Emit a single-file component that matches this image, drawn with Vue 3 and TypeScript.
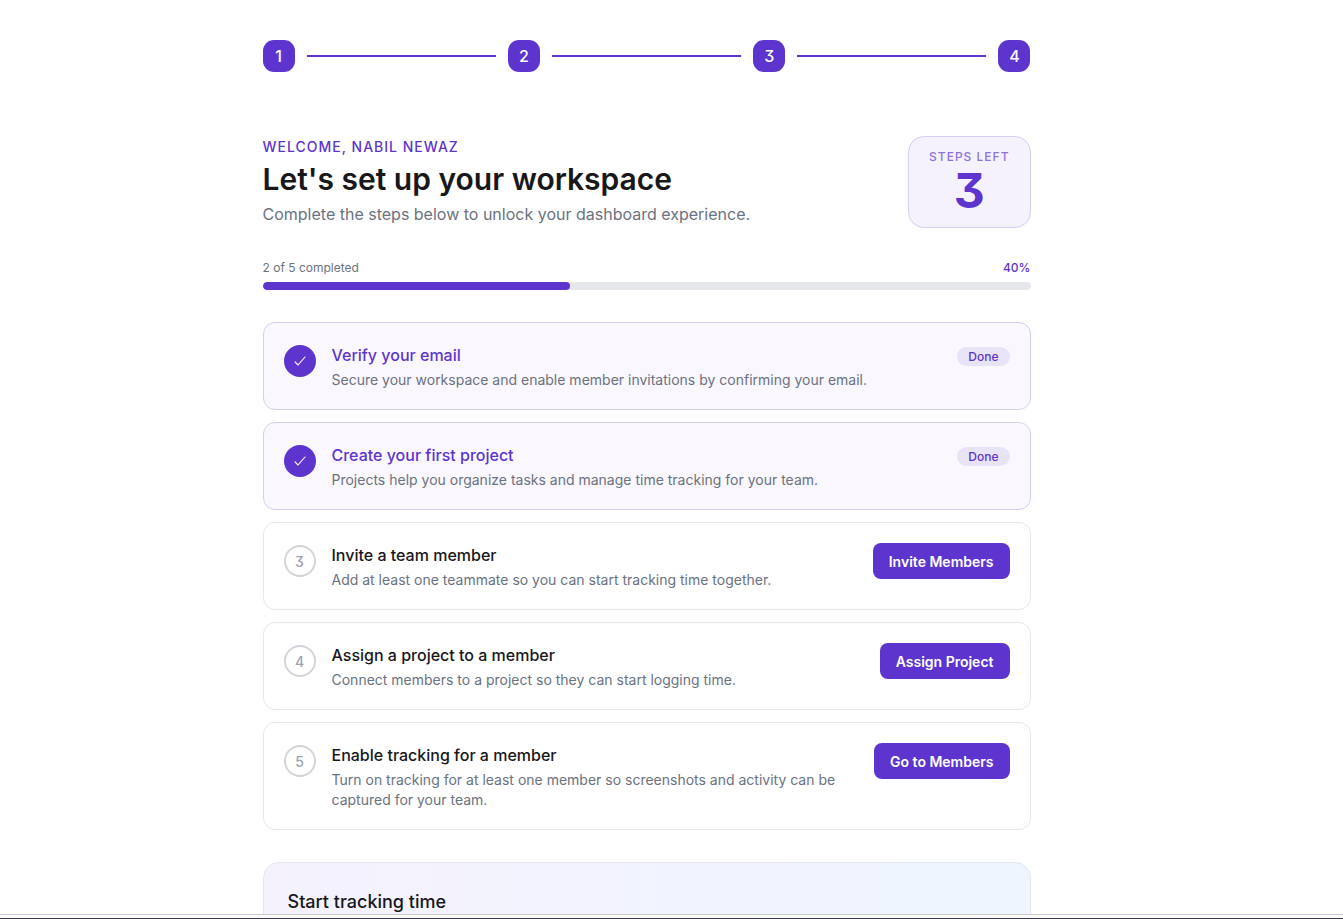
<script setup lang="ts">
import { computed } from 'vue'

interface Task {
  title: string
  description: string
  done: boolean
  action?: string
}

const userName = 'Nabil Newaz'
const stages = [1, 2, 3, 4]

const tasks: Task[] = [
  {
    title: 'Verify your email',
    description: 'Secure your workspace and enable member invitations by confirming your email.',
    done: true,
  },
  {
    title: 'Create your first project',
    description: 'Projects help you organize tasks and manage time tracking for your team.',
    done: true,
  },
  {
    title: 'Invite a team member',
    description: 'Add at least one teammate so you can start tracking time together.',
    done: false,
    action: 'Invite Members',
  },
  {
    title: 'Assign a project to a member',
    description: 'Connect members to a project so they can start logging time.',
    done: false,
    action: 'Assign Project',
  },
  {
    title: 'Enable tracking for a member',
    description:
      'Turn on tracking for at least one member so screenshots and activity can be captured for your team.',
    done: false,
    action: 'Go to Members',
  },
]

const completed = computed(() => tasks.filter((t) => t.done).length)
const remaining = computed(() => tasks.length - completed.value)
const percent = computed(() => Math.round((completed.value / tasks.length) * 100))
</script>

<template>
  <div class="shell">
    <main class="page">
      <div class="content">
        <ol class="stepper">
          <template v-for="n in stages" :key="n">
            <li v-if="n > 1" class="connector" aria-hidden="true"></li>
            <li class="stage">{{ n }}</li>
          </template>
        </ol>

        <header class="intro">
          <div class="intro-text">
            <p class="eyebrow">Welcome, {{ userName }}</p>
            <h1>Let's set up your workspace</h1>
            <p class="lead">Complete the steps below to unlock your dashboard experience.</p>
          </div>
          <div class="counter">
            <span class="counter-label">Steps left</span>
            <strong class="counter-value">{{ remaining }}</strong>
          </div>
        </header>

        <section class="progress">
          <div class="progress-row">
            <span id="progress-label">{{ completed }} of {{ tasks.length }} completed</span>
            <span class="percent">{{ percent }}%</span>
          </div>
          <div
            class="track"
            role="progressbar"
            aria-labelledby="progress-label"
            :aria-valuenow="percent"
            aria-valuemin="0"
            aria-valuemax="100"
          >
            <div class="fill" :style="{ width: percent + '%' }"></div>
          </div>
        </section>

        <ul class="tasks">
          <li v-for="(task, i) in tasks" :key="task.title" class="task" :class="{ done: task.done }">
            <span class="marker">
              <svg v-if="task.done" width="16" height="16" viewBox="0 0 16 16" fill="none" aria-hidden="true">
                <path d="M3 8.9 6 12 13 4" stroke="currentColor" stroke-width="1.1" stroke-linecap="round" stroke-linejoin="round" />
              </svg>
              <template v-else>{{ i + 1 }}</template>
            </span>
            <div class="task-text">
              <h2>{{ task.title }}</h2>
              <p>{{ task.description }}</p>
            </div>
            <span v-if="task.done" class="pill">Done</span>
            <button v-else type="button" class="action">{{ task.action }}</button>
          </li>
        </ul>

        <section class="panel">
          <h2>Start tracking time</h2>
        </section>
      </div>
    </main>
    <div class="edge"></div>
  </div>
</template>

<style>
body {
  margin: 0;
  background: #fff;
}
</style>

<style scoped>
.shell {
  display: flex;
  flex-direction: column;
  height: 100vh;
  font-family: Inter, 'Liberation Sans', sans-serif;
  font-feature-settings: 'cv09';
  color: #18181b;
}

.shell *,
.shell {
  box-sizing: border-box;
}

h1,
h2,
p,
ol,
ul {
  margin: 0;
  padding: 0;
}

ol,
ul {
  list-style: none;
}

.page {
  flex: 1;
  min-height: 0;
  overflow: hidden;
  padding: 40px 50px 0 0;
}

.content {
  max-width: 768px;
  margin: 0 auto;
}

.stepper {
  display: flex;
  align-items: center;
  gap: 12px;
}

.stage {
  display: flex;
  align-items: center;
  justify-content: center;
  width: 32px;
  height: 32px;
  border-radius: 11px;
  background: #5d35ce;
  color: #fff;
  font-size: 16px;
  font-weight: 500;
}

.connector {
  flex: 1;
  height: 2px;
  background: #5d35ce;
}

.intro {
  display: flex;
  align-items: flex-start;
  justify-content: space-between;
  gap: 16px;
  margin-top: 64px;
}

.eyebrow {
  font-size: 14px;
  line-height: 22px;
  font-weight: 500;
  letter-spacing: 1px;
  text-transform: uppercase;
  color: #5d35ce;
}

h1 {
  margin-top: 2px;
  font-size: 30px;
  line-height: 38px;
  font-weight: 600;
}

.lead {
  margin-top: 4px;
  font-size: 16px;
  line-height: 24px;
  color: #6b7280;
}

.counter {
  display: flex;
  flex-direction: column;
  align-items: center;
  padding: 12px 20px;
  border: 1px solid #d6cdf3;
  border-radius: 16px;
  background: #f5f2fd;
  color: #5d35ce;
}

.counter-label {
  font-size: 12px;
  line-height: 16px;
  font-weight: 500;
  letter-spacing: 1px;
  text-transform: uppercase;
  color: #8e72dd;
}

.counter-value {
  margin-top: 2px;
  font-size: 48px;
  line-height: 48px;
  font-weight: 700;
}

.progress {
  margin-top: 32px;
}

.progress-row {
  display: flex;
  justify-content: space-between;
  font-size: 12px;
  line-height: 16px;
  color: #6b7280;
}

.percent {
  font-weight: 500;
  color: #5d35ce;
}

.track {
  height: 8px;
  margin-top: 6px;
  overflow: hidden;
  border-radius: 4px;
  background: #e5e7eb;
}

.fill {
  height: 100%;
  border-radius: 4px;
  background: #5d35ce;
}

.tasks {
  display: flex;
  flex-direction: column;
  gap: 12px;
  margin-top: 32px;
}

.task {
  display: flex;
  align-items: flex-start;
  gap: 16px;
  padding: 20px 20px 19px;
  border: 1px solid #e5e7eb;
  border-radius: 12px;
  background: #fff;
}

.task.done {
  border-color: #d6cdf3;
  background: #faf7fe;
}

.marker {
  display: flex;
  flex: none;
  align-items: center;
  justify-content: center;
  width: 32px;
  height: 32px;
  margin-top: 2px;
  border: 2px solid #d1d5db;
  border-radius: 50%;
  font-size: 14px;
  font-weight: 500;
  color: #9ca3af;
}

.done .marker {
  border-color: #5d35ce;
  background: #5d35ce;
  color: #fff;
}

.task-text {
  flex: 1;
  min-width: 0;
}

.task-text h2 {
  font-size: 16px;
  line-height: 24px;
  font-weight: 500;
}

.done h2 {
  color: #5d35ce;
}

.task-text p {
  margin-top: 3px;
  font-size: 14px;
  line-height: 20px;
  color: #6b7280;
}

.pill {
  margin-top: 4px;
  padding: 2px 11px;
  border-radius: 10px;
  background: #e9e3f8;
  font-size: 12px;
  line-height: 15px;
  font-weight: 500;
  color: #5d35ce;
}

.action {
  flex: none;
  height: 36px;
  padding: 0 16px;
  border: 0;
  border-radius: 8px;
  background: #5d35ce;
  color: #fff;
  font: inherit;
  font-size: 14px;
  font-weight: 600;
  cursor: pointer;
}

.panel {
  margin-top: 32px;
  padding: 24px;
  min-height: 120px;
  border: 1px solid #e5e7eb;
  border-radius: 16px;
  background: linear-gradient(90deg, #f5f2fe, #eef5ff);
}

.panel h2 {
  font-size: 18px;
  line-height: 30px;
  font-weight: 500;
}

.edge {
  flex: none;
  height: 5px;
  border-top: 1px solid #c8c8c8;
  border-bottom: 1px solid #3f3a5c;
  background: #fafafa;
}
</style>
